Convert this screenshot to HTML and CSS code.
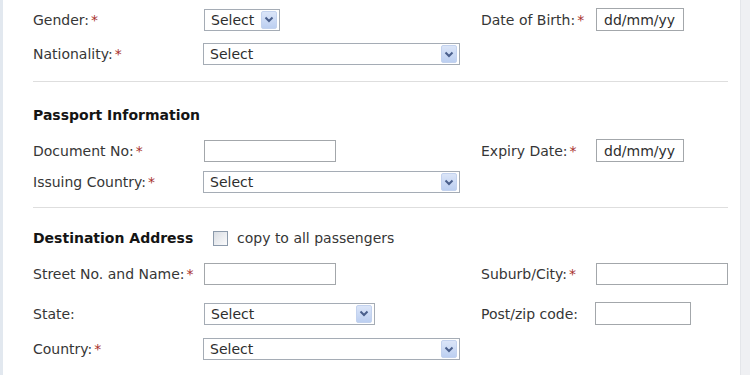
FILE: index.html
```html
<!DOCTYPE html>
<html lang="en">
<head>
  <meta charset="UTF-8">
  <title>Passenger Details</title>
  <link rel="stylesheet" href="styles.css">
</head>
<body>
  <div class="page">
    <div class="edge"></div>

    <div class="form">
      <!-- personal -->
      <div class="row first">
        <label>Gender:<em>*</em></label>
        <div><span class="select w-gender">Select<span class="arrow"><svg width="10" height="7" viewBox="0 0 10 7"><path d="M1.5 1.5 L5 5 L8.5 1.5" fill="none" stroke="#4a5f8c" stroke-width="2"/></svg></span></span></div>
        <label>Date of Birth:<em>*</em></label>
        <div><span class="input w-date">dd/mm/yy</span></div>
      </div>
      <div class="row gap13">
        <label>Nationality:<em>*</em></label>
        <div><span class="select w-wide">Select<span class="arrow"><svg width="10" height="7" viewBox="0 0 10 7"><path d="M1.5 1.5 L5 5 L8.5 1.5" fill="none" stroke="#4a5f8c" stroke-width="2"/></svg></span></span></div>
      </div>

      <hr class="sep sep1">

      <!-- passport -->
      <div class="row head head1">
        <h3>Passport Information</h3>
      </div>
      <div class="row gap13">
        <label>Document No:<em>*</em></label>
        <div><span class="input w-text"></span></div>
        <label>Expiry Date:<em>*</em></label>
        <div><span class="input w-date">dd/mm/yy</span></div>
      </div>
      <div class="row gap10">
        <label>Issuing Country:<em>*</em></label>
        <div><span class="select w-wide">Select<span class="arrow"><svg width="10" height="7" viewBox="0 0 10 7"><path d="M1.5 1.5 L5 5 L8.5 1.5" fill="none" stroke="#4a5f8c" stroke-width="2"/></svg></span></span></div>
      </div>

      <hr class="sep sep2">

      <!-- destination -->
      <div class="row head head2">
        <h3>Destination Address</h3>
        <div class="copy"><span class="checkbox"></span>copy to all passengers</div>
      </div>
      <div class="row gap14">
        <label>Street No. and Name:<em>*</em></label>
        <div><span class="input w-text"></span></div>
        <label>Suburb/City:<em>*</em></label>
        <div><span class="input w-text"></span></div>
      </div>
      <div class="row gap17">
        <label>State:</label>
        <div><span class="select w-state">Select<span class="arrow"><svg width="10" height="7" viewBox="0 0 10 7"><path d="M1.5 1.5 L5 5 L8.5 1.5" fill="none" stroke="#4a5f8c" stroke-width="2"/></svg></span></span></div>
        <label>Post/zip code:</label>
        <div><span class="input w-zip"></span></div>
      </div>
      <div class="row gap14">
        <label>Country:<em>*</em></label>
        <div><span class="select w-wide">Select<span class="arrow"><svg width="10" height="7" viewBox="0 0 10 7"><path d="M1.5 1.5 L5 5 L8.5 1.5" fill="none" stroke="#4a5f8c" stroke-width="2"/></svg></span></span></div>
      </div>
    </div>

    <div class="scroll"></div>
  </div>
</body>
</html>
```

FILE: styles.css
```css
body {
  margin: 0;
  font-family: "DejaVu Sans", Verdana, sans-serif;
  font-size: 14px;
  color: #363636;
  background-color: #fff;
}

.page {
  display: flex;
  height: 375px;
  overflow: hidden;
}

.edge {
  width: 3px;
  background-color: #e2e8ef;
}

.form {
  flex: 1;
  padding: 8px 12px 0 30px;
}

.scroll {
  width: 9px;
  background-color: #eff0f3;
  border-left: 1px solid #e4e6ea;
}

.row {
  display: grid;
  grid-template-columns: 171px 277px 115px 1fr;
  align-items: center;
  height: 22px;
}

.row.gap10 { margin-top: 10px; }
.row.gap13 { margin-top: 13px; }
.row.gap14 { margin-top: 14px; }
.row.gap17 { margin-top: 17px; }
.row.head1 { margin-top: 22px; }
.row.head2 { margin-top: 19px; }

label {
  white-space: nowrap;
}

label em {
  font-style: normal;
  color: #a8302c;
  margin-left: 2px;
}

h3 {
  margin: 0;
  font-size: 14px;
  font-weight: bold;
  color: #141414;
  white-space: nowrap;
}

.sep {
  border: 0;
  border-top: 1px solid #dedede;
  margin: 0;
}

.sep1 { margin-top: 16px; }
.sep2 { margin-top: 14px; }

/* fake select boxes */
.select {
  position: relative;
  display: flex;
  align-items: center;
  box-sizing: border-box;
  height: 22px;
  padding-left: 6px;
  border: 1px solid #a5acb5;
  background-color: #fff;
  color: #2e2e2e;
}

.select .arrow {
  position: absolute;
  right: 2px;
  top: 1px;
  width: 16px;
  height: 18px;
  box-sizing: border-box;
  border: 1px solid #c3d2ee;
  border-radius: 2px;
  background: linear-gradient(#dbe5f8, #bccff1);
  display: flex;
  align-items: center;
  justify-content: center;
}

.input {
  display: flex;
  align-items: center;
  box-sizing: border-box;
  height: 22px;
  padding-left: 7px;
  border: 1px solid #a3a7ab;
  background-color: #fff;
  color: #2e2e2e;
}

.w-gender { width: 76px; }
.w-wide { width: 257px; margin-left: -1px; }
.w-state { width: 171px; }
.w-text { width: 132px; }
.w-date { width: 88px; height: 23px; }
.w-zip { width: 96px; margin-left: -1px; height: 23px; }

.copy {
  display: flex;
  align-items: center;
  margin-left: 9px;
  white-space: nowrap;
}

.checkbox {
  width: 15px;
  height: 15px;
  box-sizing: border-box;
  border: 1px solid #8c9aab;
  background: linear-gradient(135deg, #d9dde3, #fbfbfc);
  margin-right: 9px;
}
```
